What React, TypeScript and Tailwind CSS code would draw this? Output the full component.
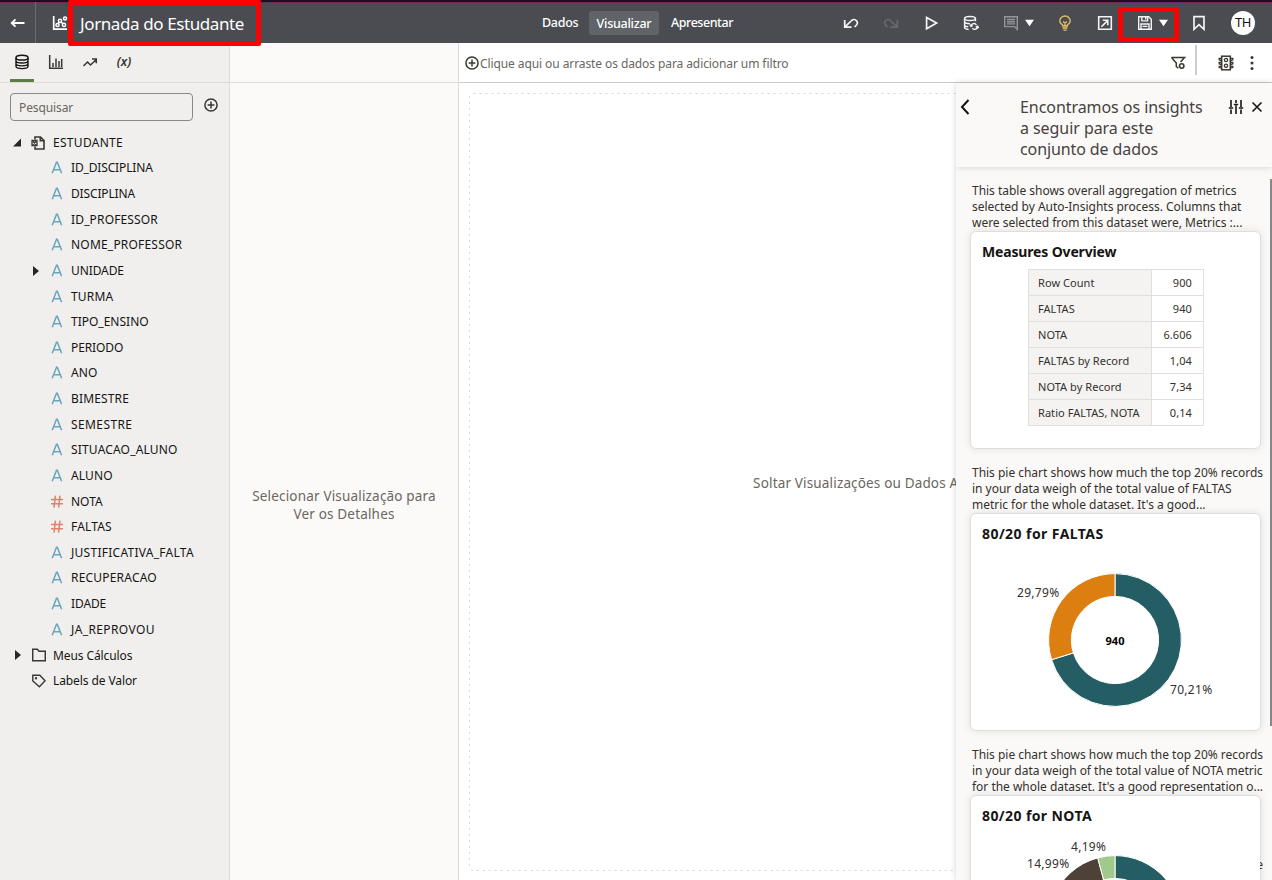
import React from "react";

type P = { children?: React.ReactNode; className?: string };

const Icon = ({ children, className = "" }: P) => (
  <svg width="16" height="16" viewBox="0 0 16 16" fill="none" stroke="currentColor" strokeWidth="1.5" className={"block shrink-0 " + className}>
    {children}
  </svg>
);

const Slot = ({ children, className = "" }: P) => (
  <div className={"flex h-full w-10 shrink-0 items-center justify-center text-[#f4f4f4] " + className}>{children}</div>
);

const CaretDown = () => (
  <svg width="10" height="8" viewBox="0 0 10 8" className="mt-px block shrink-0 fill-white">
    <path d="M0 0.800h9L4.500 7.200z" />
  </svg>
);

const PlusCircle = () => (
  <svg width="14" height="14" viewBox="0 0 14 14" fill="none" stroke="#3a3632" strokeWidth="1.5" className="block shrink-0">
    <circle cx="7" cy="7" r="6.1" />
    <path d="M7 3.6v6.8M3.6 7h6.8" />
  </svg>
);

const LetterIcon = () => (
  <svg width="12" height="13" viewBox="0 0 12 13" fill="none" stroke="#6aa5be" strokeWidth="1.5" className="-mt-px block shrink-0">
    <path d="M1.2 12.3L5.5 1.2h0.8L10.6 12.3M2.7 8.8h6.4" />
  </svg>
);

const HashIcon = () => (
  <svg width="12" height="13" viewBox="0 0 12 13" fill="none" stroke="#e0806d" strokeWidth="1.5" className="-mt-px block shrink-0">
    <path d="M0 4.5h12M0 8.8h12M4.4 0.6L3 12.6M9 0.6L7.6 12.6" />
  </svg>
);

const CaretRight = () => (
  <svg width="7" height="10" viewBox="0 0 7 10" className="block shrink-0 fill-[#2a2622]">
    <path d="M0 0L6 5L0 10z" />
  </svg>
);

const fields: { name: string; num?: boolean; open?: boolean; track: string }[] = [
  { name: "ID_DISCIPLINA", track: "tracking-[-0.15px]" },
  { name: "DISCIPLINA", track: "tracking-[-0.15px]" },
  { name: "ID_PROFESSOR", track: "tracking-[0.15px]" },
  { name: "NOME_PROFESSOR", track: "tracking-[0.2px]" },
  { name: "UNIDADE", open: true, track: "tracking-[-0.1px]" },
  { name: "TURMA", track: "tracking-[0.2px]" },
  { name: "TIPO_ENSINO", track: "tracking-[0px]" },
  { name: "PERIODO", track: "tracking-[-0.1px]" },
  { name: "ANO", track: "tracking-[0.1px]" },
  { name: "BIMESTRE", track: "tracking-[0.15px]" },
  { name: "SEMESTRE", track: "tracking-[0.4px]" },
  { name: "SITUACAO_ALUNO", track: "tracking-[0.17px]" },
  { name: "ALUNO", track: "tracking-[0.1px]" },
  { name: "NOTA", num: true, track: "tracking-[0px]" },
  { name: "FALTAS", num: true, track: "tracking-[0.15px]" },
  { name: "JUSTIFICATIVA_FALTA", track: "tracking-[0.27px]" },
  { name: "RECUPERACAO", track: "tracking-[0.2px]" },
  { name: "IDADE", track: "tracking-[-0.1px]" },
  { name: "JA_REPROVOU", track: "tracking-[0.38px]" },
];

const metrics = [
  ["Row Count", "900"],
  ["FALTAS", "940"],
  ["NOTA", "6.606"],
  ["FALTAS by Record", "1,04"],
  ["NOTA by Record", "7,34"],
  ["Ratio FALTAS, NOTA", "0,14"],
];

function slice(from: number, to: number) {
  const at = (f: number, r: number) => {
    const a = f * Math.PI * 2 - Math.PI / 2;
    return `${(70 + r * Math.cos(a)).toFixed(2)} ${(70 + r * Math.sin(a)).toFixed(2)}`;
  };
  const big = to - from > 0.5 ? 1 : 0;
  return `M${at(from, 66.4)}A66.4 66.4 0 ${big} 1 ${at(to, 66.4)}L${at(to, 43.6)}A43.6 43.6 0 ${big} 0 ${at(from, 43.6)}Z`;
}

const Donut = ({ parts }: { parts: { from: number; to: number; color: string }[] }) => (
  <svg width="140" height="140" viewBox="0 0 140 140" className="block">
    {parts.map((p) => (
      <path key={p.from} d={slice(p.from, p.to)} fill={p.color} stroke="#fff" strokeWidth="1" />
    ))}
  </svg>
);

const Insight = ({ lines, title, track, children }: { lines: string[]; title: string; track: string; children: React.ReactNode }) => (
  <section className="mb-4">
    <p className="ml-4 h-12 text-[12px] leading-4 tracking-[-0.02px] whitespace-nowrap text-[#33302d]">
      {lines.map((l) => (
        <span key={l} className="block">{l}</span>
      ))}
    </p>
    <div className="relative ml-[14px] h-[218px] w-[291px] rounded-md border border-[#dfdedc] bg-white shadow-[0_0_8px_rgba(0,0,0,0.10)]">
      <h3 className={"pt-[10px] pl-[11px] text-[14px] leading-5 font-bold text-[#161513] " + track}>{title}</h3>
      {children}
    </div>
  </section>
);

const Header = () => (
  <header className="relative flex h-[43px] shrink-0 items-center border-t-2 border-[#1c0d1b] bg-[#4a4c52] text-white shadow-[inset_0_1px_0_#6b2a66]">
    <div className="flex h-full w-9 items-center justify-center border-r border-[#6a6c71]">
      <Icon><path d="M14.500 8H1.500M5.500 4.300L1.700 8l3.800 3.700" strokeWidth="1.800" /></Icon>
    </div>
    <div className="flex h-full w-[44px] items-center pl-4">
      <Icon>
        <path d="M1.700 1v13.200H15" strokeWidth="1.700" />
        <circle cx="5.500" cy="10" r="1.600" /><circle cx="8" cy="5.800" r="1.600" /><circle cx="12" cy="9.900" r="1.600" /><circle cx="13" cy="3.400" r="1.500" />
        <path d="M6.200 8.700L7.300 7.100M9.100 6.900l1.700 1.800" />
      </Icon>
    </div>
    <h1 className="w-[450px] pt-[2px] text-[17px] leading-6 tracking-[-0.4px] whitespace-nowrap">Jornada do Estudante</h1>
    <nav className="flex w-[301px] items-center text-[12.500px] leading-[26px] font-medium whitespace-nowrap">
      <span className="w-[59px] pl-3 tracking-[-0.300px]">Dados</span>
      <span className="h-6 w-[70px] rounded-[3px] bg-[#606368] text-center tracking-[-0.250px]">Visualizar</span>
      <span className="pl-3 tracking-[-0.450px]">Apresentar</span>
    </nav>
    <Slot><Icon><path d="M1.700 5v7.200h6.800M2 11.800l6.600-6.300a3.300 3.300 0 0 1 4.900 0.200c1.200 1.500 0.900 3.300-0.200 4.500L11.600 12" strokeWidth="1.700" /></Icon></Slot>
    <Slot><Icon className="text-[#67696e]"><path d="M14.300 5v7.200H7.500M14 11.800L7.400 5.500a3.300 3.300 0 0 0-4.900 0.200c-1.200 1.500-0.900 3.300 0.200 4.500L4.400 12" strokeWidth="1.700" /></Icon></Slot>
    <Slot><Icon><path d="M3.600 2.400v11.400L13.600 8.100z" strokeWidth="1.700" /></Icon></Slot>
    <Slot>
      <Icon>
        <ellipse cx="7" cy="3.600" rx="5.400" ry="2" />
        <path d="M1.600 3.600v9c0 1 2 1.700 4 1.800M12.400 3.600v2.600M1.600 6.800c0 1.200 2.400 1.900 5.400 1.900M1.600 9.900c0 1 1.600 1.600 3.600 1.800" />
        <path d="M8 11.200a2.900 2.900 0 0 1 5.400-1.200M7 9.600l1 1.800 1.700-0.800M14.600 11.400a2.900 2.900 0 0 1-5.200 1.800M15.800 13l-1.200-1.800-1.900 1" strokeWidth="1.400" />
      </Icon>
    </Slot>
    <Slot className="w-[54px] justify-start pl-3">
      <Icon className="text-[#93959a]"><path d="M1.700 1.800h12.600v12.600l-2.800-2.800H1.700zM4 4.500h8M4 6.700h8M4 8.900h8" strokeWidth="1.400" /></Icon>
      <span className="ml-[6px]"><CaretDown /></span>
    </Slot>
    <Slot><Icon className="text-[#e6c15f]"><path d="M5.600 11V9.800C3.900 8.900 2.800 7.600 2.800 5.800a5.200 4.800 0 0 1 10.400 0c0 1.800-1.100 3.100-2.800 4V11zM5.600 13h4.800M6.400 15.200h3.200M6 6.600l2 1.400 2-1.400M8 8V11" strokeWidth="1.300" /></Icon></Slot>
    <Slot><Icon><path d="M1.700 1.700h12.600v12.600H1.700zM4.400 11.800l6.200-6.200M5.800 5.300h5v5" strokeWidth="1.600" /></Icon></Slot>
    <Slot className="w-[54px] justify-start pl-3">
      <Icon><path d="M1.700 1.700h10l2.600 2.600v10H1.700zM4.800 1.900v4h5.800v-4M8.700 2.400v2M4 14.200V9h8v5.200M5.600 11.400h4.800" strokeWidth="1.400" /></Icon>
      <span className="ml-[6px]"><CaretDown /></span>
    </Slot>
    <Slot><Icon><path d="M3 1.700h10v12.600l-5-4.600-5 4.600z" strokeWidth="1.700" /></Icon></Slot>
    <div className="flex w-12 justify-center">
      <span className="flex size-6 items-center justify-center rounded-full bg-white pt-px text-[13px] tracking-[-0.500px] text-[#161513]">TH</span>
    </div>
    <div className="absolute -top-[2px] left-[68px] h-[46px] w-[193px] rounded-[2px] border-5 border-[#fe0000]" />
    <div className="absolute top-[5px] left-[1118px] h-[35px] w-[61px] rounded-[2px] border-5 border-[#fe0000]" />
  </header>
);

const Sidebar = () => (
  <aside className="flex w-[230px] shrink-0 flex-col border-r border-[#dedcda] bg-[#f0efed] text-[#161513]">
    <div className="flex h-10 shrink-0 border-b border-[#dedcda] pl-[10px] text-[#3a3632]">
      <div className="flex w-6 justify-center border-b-3 border-[#5d7f46] pt-[11px] text-[#161513]">
        <Icon><ellipse cx="8" cy="3.700" rx="6" ry="2.400" /><path d="M2 3.700v8.600c0 1.300 2.700 2.300 6 2.300s6-1 6-2.300V3.700M2 6.700C2 8 4.700 9 8 9s6-1 6-2.300M2 9.600c0 1.300 2.700 2.300 6 2.300s6-1 6-2.300" strokeWidth="1.400" /></Icon>
      </div>
      <div className="flex w-[44px] justify-center pt-[11px]"><Icon><path d="M1.700 1v13.300H15M5 13V9M8 13V4.500M11 13V7M13.700 13V5" strokeWidth="1.500" /></Icon></div>
      <div className="flex w-6 justify-center pt-[11px]"><Icon><path d="M1.500 12l4-4 3 3 5.300-5M10 5h4.300v4.300" strokeWidth="1.500" /></Icon></div>
      <div className="w-[44px] pt-[9px] text-center text-[12.500px] leading-5 font-semibold italic">(x)</div>
    </div>
    <div className="flex pt-[10px] pl-[10px]">
      <div className="h-7 w-[183px] rounded-[4px] border border-[#8b8782] pl-2 text-[12px] leading-[28px] tracking-[-0.1px] text-[#6a6661]">Pesquisar</div>
      <div className="pt-[5px] pl-[11px]"><PlusCircle /></div>
    </div>
    <div className="mt-[9px] text-[12px] whitespace-nowrap">
      <div className="flex h-[25.640px] items-center">
        <div className="flex w-[31px] pl-[13px]"><svg width="9" height="9" viewBox="0 0 9 9" className="fill-[#2a2622]"><path d="M8 0.500v8H0z" /></svg></div>
        <svg width="14" height="14" viewBox="0 0 14 14" fill="none" stroke="#3a3632" strokeWidth="1.600" className="mr-2 block"><path d="M4 3.500V1h5.500L13 4.500V13H4v-2.500M9.300 1v3.700H13" /><path d="M1 4.500h5v5H1zM2 5.500l3 3M5 5.500l-3 3" strokeWidth="1.300" /></svg>
        <span className="tracking-[0.3px]">ESTUDANTE</span>
      </div>
      {fields.map((f) => (
        <div key={f.name} className="flex h-[25.640px] items-center">
          <div className="w-[51px] pl-[33px]">{f.open && <CaretRight />}</div>
          {f.num ? <HashIcon /> : <LetterIcon />}
          <span className={"ml-2 " + f.track}>{f.name}</span>
        </div>
      ))}
      <div className="flex h-[25.640px] items-center">
        <div className="w-[32px] pl-[15px]"><CaretRight /></div>
        <svg width="14" height="14" viewBox="0 0 14 14" fill="none" stroke="#3a3632" strokeWidth="1.500" className="mr-[7px] block"><path d="M0.700 1.200h4.600l1.700 2h6.300v9.600H0.700z" /></svg>
        <span className="pt-px tracking-[-0.1px]">Meus Cálculos</span>
      </div>
      <div className="flex h-[25.640px] items-center pl-8">
        <svg width="14" height="14" viewBox="0 0 14 14" fill="none" stroke="#3a3632" strokeWidth="1.400" className="mr-[7px] block"><path d="M0.800 1.200h7l5.300 5.500-5.700 6L0.800 7z" /><circle cx="4" cy="4.200" r="0.500" /></svg>
        <span className="tracking-[-0.1px]">Labels de Valor</span>
      </div>
    </div>
  </aside>
);

const InsightsPanel = () => (
  <div className="absolute top-0 right-0 bottom-0 w-[316px] overflow-hidden bg-[#faf9f7]">
    <div className="relative z-10 flex h-[84px] bg-[#fbf9f8] pt-[14px] shadow-[0_1px_6px_rgba(0,0,0,0.13)]">
      <svg width="10" height="16" viewBox="0 0 10 16" fill="none" stroke="#161513" strokeWidth="2" className="mt-[2px] ml-1 shrink-0"><path d="M8.500 1L2 8l6.500 7" /></svg>
      <h2 className="ml-[50px] w-[208px] text-[16px] leading-[21px] tracking-[-0.060px] whitespace-nowrap text-[#45423f]">
        <span className="block">Encontramos os insights</span>
        <span className="block">a seguir para este</span>
        <span className="block tracking-[-0.100px]">conjunto de dados</span>
      </h2>
      <Icon className="mt-[2px] text-[#161513]"><path d="M3 1v7M3 10.500V15M8 1v3M8 6.500V15M13 1v7M13 10.500V15M0.800 9h4.400M5.800 5.500h4.400M10.800 9h4.400" strokeWidth="1.600" /></Icon>
      <svg width="12" height="12" viewBox="0 0 12 12" fill="none" stroke="#161513" strokeWidth="1.600" className="mt-[4px] ml-[7px] shrink-0"><path d="M1.500 1.500l9 9M10.500 1.500l-9 9" /></svg>
    </div>
    <div className="pt-4">
      <Insight
        title="Measures Overview"
        track="tracking-[-0.160px]"
        lines={["This table shows overall aggregation of metrics", "selected by Auto-Insights process. Columns that", "were selected from this dataset were, Metrics :..."]}
      >
        <div className="mt-[7px] ml-[57px] grid w-[176px] grid-cols-[124px_52px] border-t border-[#dfdfde] text-[11px] leading-[25px] text-[#33302d]">
          {metrics.map(([k, v]) => (
            <React.Fragment key={k}>
              <div className="h-[26px] border-x border-b border-[#dfdfde] bg-[#f4f3f2] pl-[9px] tracking-[0.050px] whitespace-nowrap">{k}</div>
              <div className="h-[26px] border-r border-b border-[#dfdfde] pr-[11px] text-right tracking-[0.1px]">{v}</div>
            </React.Fragment>
          ))}
        </div>
      </Insight>
      <Insight
        title="80/20 for FALTAS"
        track="tracking-[0.430px]"
        lines={["This pie chart shows how much the top 20% records", "in your data weigh of the total value of FALTAS", "metric for the whole dataset. It's a good..."]}
      >
        <div className="relative mt-[26px] ml-[74px] w-[140px]">
          <Donut parts={[{ from: 0, to: 0.7021, color: "#245d63" }, { from: 0.7021, to: 1, color: "#dd7f10" }]} />
          <span className="absolute inset-0 flex items-center justify-center pt-[2px] text-[11px] font-bold text-black">940</span>
          <span className="absolute top-[15px] -left-[28px] text-[12px] leading-4 tracking-[0.300px] text-[#33302d]">29,79%</span>
          <span className="absolute top-[112px] left-[125px] text-[12px] leading-4 tracking-[0.300px] text-[#33302d]">70,21%</span>
        </div>
      </Insight>
      <Insight
        title="80/20 for NOTA"
        track="tracking-[0.400px]"
        lines={["This pie chart shows how much the top 20% records", "in your data weigh of the total value of NOTA metric", "for the whole dataset. It's a good representation o..."]}
      >
        <span className="absolute top-[61px] -right-[3px] h-4 w-[3px] overflow-hidden text-[12px] leading-4 text-[#33302d] [direction:rtl]">e</span>
        <div className="relative mt-[26px] ml-[74px] w-[140px]">
          <Donut parts={[{ from: 0, to: 0.8082, color: "#245d63" }, { from: 0.8082, to: 0.9581, color: "#4e4137" }, { from: 0.9581, to: 1, color: "#a0c98b" }]} />
          <span className="absolute -top-[13px] left-[26px] text-[12px] leading-4 tracking-[0.300px] text-[#33302d]">4,19%</span>
          <span className="absolute top-[4px] -left-[18px] text-[12px] leading-4 tracking-[0.300px] text-[#33302d]">14,99%</span>
        </div>
      </Insight>
    </div>
    <div className="absolute top-[96px] right-0 h-[547px] w-[2px] bg-[#878787]" />
  </div>
);

export default function App() {
  return (
    <div className="flex h-[880px] w-[1272px] flex-col overflow-hidden bg-white font-['Noto_Sans',sans-serif]">
      <Header />
      <div className="flex min-h-0 grow">
        <Sidebar />
        <section className="flex w-[229px] shrink-0 flex-col border-r border-[#dedcda] bg-[#fcfaf8]">
          <div className="h-10 shrink-0 border-b border-[#dedcda]" />
          <p className="mt-[404px] text-center text-[13.500px] leading-[18px] tracking-[0.180px] text-[#6a6661]">
            Selecionar Visualização para<br />Ver os Detalhes
          </p>
        </section>
        <main className="flex min-w-0 grow flex-col bg-white">
          <div className="flex h-10 shrink-0 items-center border-b border-[#d0cdc9] pl-[6px]">
            <PlusCircle />
            <span className="ml-px w-[690px] pt-[2px] text-[12px] tracking-[-0.090px] text-[#6a6661]">Clique aqui ou arraste os dados para adicionar um filtro</span>
            <Icon className="text-[#3a3632]"><path d="M1.500 2.500h13L10.500 7M1.500 2.500L6.300 8v3.500l2 1.800" strokeWidth="1.500" /><circle cx="11.700" cy="11" r="2.200" strokeWidth="1.600" /></Icon>
            <div className="-mt-[5px] ml-[9px] h-[30px] w-[2px] bg-[#d0cdc9]" />
            <Icon className="ml-[21px] text-[#3a3632]"><rect x="3.700" y="1.200" width="8.600" height="13.600" /><circle cx="8" cy="5" r="1.600" strokeWidth="1.300" /><circle cx="8" cy="10.800" r="1.600" strokeWidth="1.300" /><path d="M3.500 3.500H1.200v1.300l2.300 1M3.500 7.500H1.200v1.300l2.300 1M3.500 11.300H1.200v1.300l2.300 0.600M12.500 3.500h2.300v1.300l-2.300 1M12.500 7.500h2.300v1.300l-2.300 1M12.500 11.300h2.300v1.300l-2.300 0.600" strokeWidth="1.300" /></Icon>
            <svg width="4" height="16" viewBox="0 0 4 16" className="ml-4 fill-[#3a3632]"><circle cx="2" cy="2.500" r="1.500" /><circle cx="2" cy="8" r="1.500" /><circle cx="2" cy="13.500" r="1.500" /></svg>
          </div>
          <div className="relative min-h-0 grow p-[10px]">
            <div className="relative flex h-[778px] w-[794px] items-center justify-center pt-[2px] text-[13.500px] tracking-[0.160px] text-[#6a6661]">
              <svg width="794" height="778" className="absolute inset-0" fill="none" stroke="#d8d6d3"><rect x="0.500" y="0.500" width="793" height="777" rx="4" strokeDasharray="2 4" /></svg>
              Soltar Visualizações ou Dados Aqui
            </div>
            <div className="absolute top-0 right-0 bottom-0 w-[316px] shadow-[0_0_6px_rgba(0,0,0,0.18)]" />
            <InsightsPanel />
          </div>
        </main>
      </div>
    </div>
  );
}
